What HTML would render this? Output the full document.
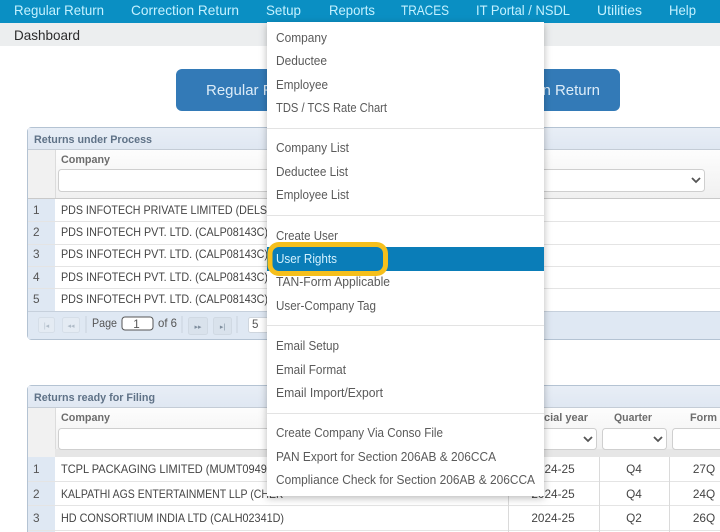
<!DOCTYPE html>
<html lang="en">
<head>
<meta charset="utf-8">
<title>Dashboard</title>
<style>
html,body{margin:0;padding:0;width:720px;height:532px;overflow:hidden;background:#fff}
svg{display:block}
text{font-family:"Liberation Sans",sans-serif}
.nav{font-size:14px;fill:#c4f1ff}
.mi{font-size:12.8px;fill:#5a5a5a}
.ph{font-size:11px;font-weight:bold;fill:#5f7287}
.ch{font-size:11px;font-weight:bold;fill:#6c6c6c}
.rt{font-size:11.8px;fill:#444}
.n{font-size:11.8px;fill:#555}
.c{text-anchor:middle}
.pg{font-size:11.6px;fill:#555}
.sel{fill:#fff;stroke:#cfcfcf}
.chev{fill:none;stroke:#555;stroke-width:1.8}
.btn{fill:#e4ebf3;stroke:#d5dee8}
.ic{font-size:7px;fill:#b0bcc8}
</style>
</head>
<body>
<svg width="720" height="532" viewBox="0 0 720 532" xmlns="http://www.w3.org/2000/svg">
<defs>
<linearGradient id="hd" x1="0" y1="0" x2="0" y2="1"><stop offset="0" stop-color="#fdfdfd"/><stop offset="1" stop-color="#f0f0f0"/></linearGradient>
<linearGradient id="ph" x1="0" y1="0" x2="0" y2="1"><stop offset="0" stop-color="#e8eef6"/><stop offset="1" stop-color="#dfe7f2"/></linearGradient>
<filter id="sh" x="-10%" y="-5%" width="120%" height="110%"><feDropShadow dx="0" dy="2" stdDeviation="4" flood-color="#000" flood-opacity=".28"/></filter>
</defs>

<!-- nav -->
<rect width="720" height="23" fill="#0a8fc3"/>
<text class="nav" x="14" y="15" textLength="90" lengthAdjust="spacingAndGlyphs">Regular Return</text>
<text class="nav" x="131" y="15" textLength="108" lengthAdjust="spacingAndGlyphs">Correction Return</text>
<text class="nav" x="266" y="15" textLength="35" lengthAdjust="spacingAndGlyphs">Setup</text>
<text class="nav" x="329" y="15" textLength="46" lengthAdjust="spacingAndGlyphs">Reports</text>
<text class="nav" x="401" y="15" textLength="48" lengthAdjust="spacingAndGlyphs">TRACES</text>
<text class="nav" x="476" y="15" textLength="94" lengthAdjust="spacingAndGlyphs">IT Portal / NSDL</text>
<text class="nav" x="597" y="15" textLength="45" lengthAdjust="spacingAndGlyphs">Utilities</text>
<text class="nav" x="669" y="15" textLength="27" lengthAdjust="spacingAndGlyphs">Help</text>

<!-- breadcrumb -->
<rect y="23" width="720" height="23" fill="#eceeef"/>
<text x="14" y="40" font-size="14" fill="#2b2b2b" textLength="66" lengthAdjust="spacingAndGlyphs">Dashboard</text>

<!-- button -->
<rect x="176" y="69" width="444" height="42" rx="6" fill="#337ab7"/>
<text x="206" y="95" font-size="15" fill="#dcecf8">Regular Return</text>
<text x="600" y="95" font-size="15" fill="#dcecf8" text-anchor="end">n Return</text>

<!-- panel 1 -->
<rect x="27.5" y="127.5" width="700" height="212" rx="4" fill="#fff" stroke="#b4c3d3"/>
<rect x="28" y="128" width="692" height="22" fill="url(#ph)"/>
<line x1="28" x2="720" y1="149.5" y2="149.5" stroke="#c4ccd6"/>
<text class="ph" x="34" y="143" textLength="118" lengthAdjust="spacingAndGlyphs">Returns under Process</text>
<rect x="28" y="150" width="692" height="49" fill="url(#hd)"/>
<rect x="28" y="150" width="27" height="49" fill="#f1f1f1"/>
<line x1="55.5" x2="55.5" y1="150" y2="199" stroke="#dcdcdc"/>
<line x1="28" x2="720" y1="198.5" y2="198.5" stroke="#c9c9c9"/>
<text class="ch" x="61" y="163" textLength="49" lengthAdjust="spacingAndGlyphs">Company</text>
<rect class="sel" x="58.5" y="169.5" width="646" height="22" rx="3"/>
<path class="chev" d="M692 178l4 4 4-4"/>
<rect x="28" y="199" width="27" height="112" fill="#dfe8f3"/>
<g stroke="#e4e4e4">
<line x1="28" x2="720" y1="221.5" y2="221.5"/>
<line x1="28" x2="720" y1="244.5" y2="244.5"/>
<line x1="28" x2="720" y1="266.5" y2="266.5"/>
<line x1="28" x2="720" y1="288.5" y2="288.5"/>
</g>
<text class="n" x="33" y="214">1</text>
<text class="n" x="33" y="236">2</text>
<text class="n" x="33" y="258">3</text>
<text class="n" x="33" y="281">4</text>
<text class="n" x="33" y="303">5</text>
<text class="rt" x="61" y="214" textLength="212" lengthAdjust="spacingAndGlyphs">PDS INFOTECH PRIVATE LIMITED (DELS0</text>
<text class="rt" x="61" y="236" textLength="207" lengthAdjust="spacingAndGlyphs">PDS INFOTECH PVT. LTD. (CALP08143C)</text>
<text class="rt" x="61" y="258" textLength="207" lengthAdjust="spacingAndGlyphs">PDS INFOTECH PVT. LTD. (CALP08143C)</text>
<text class="rt" x="61" y="281" textLength="207" lengthAdjust="spacingAndGlyphs">PDS INFOTECH PVT. LTD. (CALP08143C)</text>
<text class="rt" x="61" y="303" textLength="207" lengthAdjust="spacingAndGlyphs">PDS INFOTECH PVT. LTD. (CALP08143C)</text>
<!-- pager -->
<rect x="28" y="311" width="692" height="28" fill="#dfe8f3"/>
<line x1="28" x2="720" y1="311.5" y2="311.5" stroke="#c6d0dc"/>
<rect class="btn" x="38.5" y="317.5" width="16" height="15" rx="2"/>
<rect class="btn" x="62.5" y="317.5" width="17" height="15" rx="2"/>
<text class="ic" x="46.5" y="328" text-anchor="middle">|◂</text>
<text class="ic" x="71" y="328" text-anchor="middle">◂◂</text>
<line x1="86" x2="86" y1="316" y2="333" stroke="#c8d2dd"/>
<text class="pg" x="92" y="327" textLength="25" lengthAdjust="spacingAndGlyphs">Page</text>
<rect x="122" y="317" width="31" height="13" rx="3" fill="#fff" stroke="#555"/>
<text class="pg c" x="136.5" y="328">1</text>
<text class="pg" x="158" y="327" textLength="19" lengthAdjust="spacingAndGlyphs">of 6</text>
<line x1="182" x2="182" y1="316" y2="333" stroke="#c8d2dd"/>
<rect x="188.5" y="317.5" width="19" height="17" rx="2" fill="#d9e2ec" stroke="#d0d9e3"/>
<rect x="213.5" y="317.5" width="18" height="17" rx="2" fill="#d9e2ec" stroke="#d0d9e3"/>
<text x="198" y="329" font-size="7" fill="#7f8e9e" text-anchor="middle">▸▸</text>
<text x="222.5" y="329" font-size="7" fill="#7f8e9e" text-anchor="middle">▸|</text>
<line x1="237" x2="237" y1="316" y2="333" stroke="#c8d2dd"/>
<rect x="248.5" y="317.5" width="40" height="15" rx="2" fill="#fff" stroke="#cfd6de"/>
<text class="pg" x="252" y="328">5</text>

<!-- panel 2 -->
<rect x="27.5" y="385.5" width="700" height="160" rx="4" fill="#fff" stroke="#b4c3d3"/>
<rect x="28" y="386" width="692" height="22" fill="url(#ph)"/>
<line x1="28" x2="720" y1="407.5" y2="407.5" stroke="#c4ccd6"/>
<text class="ph" x="34" y="401" textLength="121" lengthAdjust="spacingAndGlyphs">Returns ready for Filing</text>
<rect x="28" y="408" width="692" height="41" fill="url(#hd)"/>
<rect x="28" y="408" width="27" height="49" fill="#f1f1f1"/>
<rect x="55" y="449" width="665" height="8" fill="#e6e6e6"/>
<line x1="55.5" x2="55.5" y1="408" y2="449" stroke="#dcdcdc"/>
<text class="ch" x="61" y="421" textLength="49" lengthAdjust="spacingAndGlyphs">Company</text>
<rect class="sel" x="58.5" y="428.5" width="445" height="21" rx="3"/>
<text class="ch" x="588" y="421" text-anchor="end">Financial year</text>
<text class="ch" x="614" y="421" textLength="38" lengthAdjust="spacingAndGlyphs">Quarter</text>
<text class="ch" x="690" y="421" textLength="27" lengthAdjust="spacingAndGlyphs">Form</text>
<rect class="sel" x="512.5" y="428.5" width="84" height="21" rx="3"/>
<path class="chev" d="M584 437l4 4 4-4"/>
<rect class="sel" x="602.5" y="428.5" width="64" height="21" rx="3"/>
<path class="chev" d="M654 437l4 4 4-4"/>
<rect class="sel" x="672.5" y="428.5" width="60" height="21" rx="3"/>
<rect x="28" y="457" width="27" height="75" fill="#dfe8f3"/>
<g stroke="#e4e4e4">
<line x1="28" x2="720" y1="481.5" y2="481.5"/>
<line x1="28" x2="720" y1="505.5" y2="505.5"/>
<line x1="28" x2="720" y1="530.5" y2="530.5"/>
</g>
<g stroke="#dadada">
<line x1="508.5" x2="508.5" y1="457" y2="532"/>
<line x1="599.5" x2="599.5" y1="457" y2="532"/>
<line x1="669.5" x2="669.5" y1="457" y2="532"/>
</g>
<text class="n" x="33" y="473">1</text>
<text class="n" x="33" y="498">2</text>
<text class="n" x="33" y="522">3</text>
<text class="rt" x="61" y="473" textLength="212" lengthAdjust="spacingAndGlyphs">TCPL PACKAGING LIMITED (MUMT09495</text>
<text class="rt" x="61" y="498" textLength="222" lengthAdjust="spacingAndGlyphs">KALPATHI AGS ENTERTAINMENT LLP (CHEK</text>
<text class="rt" x="61" y="522" textLength="223" lengthAdjust="spacingAndGlyphs">HD CONSORTIUM INDIA LTD (CALH02341D)</text>
<text class="rt c" x="553" y="473">2024-25</text>
<text class="rt c" x="553" y="498">2024-25</text>
<text class="rt c" x="553" y="522">2024-25</text>
<text class="rt c" x="634" y="473">Q4</text>
<text class="rt c" x="634" y="498">Q4</text>
<text class="rt c" x="634" y="522">Q2</text>
<text class="rt c" x="704" y="473">27Q</text>
<text class="rt c" x="704" y="498">24Q</text>
<text class="rt c" x="704" y="522">26Q</text>

<!-- dropdown -->
<rect x="267" y="22" width="277" height="474" fill="#fff" filter="url(#sh)"/>
<g stroke="#e3e3e3">
<line x1="267" x2="544" y1="128.5" y2="128.5"/>
<line x1="267" x2="544" y1="215.5" y2="215.5"/>
<line x1="267" x2="544" y1="325.5" y2="325.5"/>
<line x1="267" x2="544" y1="413.5" y2="413.5"/>
</g>
<text class="mi" x="276" y="42" textLength="51" lengthAdjust="spacingAndGlyphs">Company</text>
<text class="mi" x="276" y="65" textLength="51" lengthAdjust="spacingAndGlyphs">Deductee</text>
<text class="mi" x="276" y="89" textLength="52" lengthAdjust="spacingAndGlyphs">Employee</text>
<text class="mi" x="276" y="112" textLength="111" lengthAdjust="spacingAndGlyphs">TDS / TCS Rate Chart</text>
<text class="mi" x="276" y="152" textLength="73" lengthAdjust="spacingAndGlyphs">Company List</text>
<text class="mi" x="276" y="176" textLength="72" lengthAdjust="spacingAndGlyphs">Deductee List</text>
<text class="mi" x="276" y="199" textLength="73" lengthAdjust="spacingAndGlyphs">Employee List</text>
<text class="mi" x="276" y="240" textLength="62" lengthAdjust="spacingAndGlyphs">Create User</text>
<rect x="267" y="247" width="277" height="24" fill="#0a7db8"/>
<text class="mi" x="276" y="263" textLength="61" lengthAdjust="spacingAndGlyphs" style="fill:#d4f2ff">User Rights</text>
<text class="mi" x="276" y="286" textLength="114" lengthAdjust="spacingAndGlyphs">TAN-Form Applicable</text>
<text class="mi" x="276" y="310" textLength="100" lengthAdjust="spacingAndGlyphs">User-Company Tag</text>
<text class="mi" x="276" y="350" textLength="63" lengthAdjust="spacingAndGlyphs">Email Setup</text>
<text class="mi" x="276" y="374" textLength="70" lengthAdjust="spacingAndGlyphs">Email Format</text>
<text class="mi" x="276" y="397" textLength="107" lengthAdjust="spacingAndGlyphs">Email Import/Export</text>
<text class="mi" x="276" y="437" textLength="167" lengthAdjust="spacingAndGlyphs">Create Company Via Conso File</text>
<text class="mi" x="276" y="461" textLength="220" lengthAdjust="spacingAndGlyphs">PAN Export for Section 206AB &amp; 206CCA</text>
<text class="mi" x="276" y="484" textLength="259" lengthAdjust="spacingAndGlyphs">Compliance Check for Section 206AB &amp; 206CCA</text>

<!-- highlight ring -->
<rect x="270" y="244.5" width="115.5" height="29" rx="9" fill="none" stroke="#f5bf1c" stroke-width="5"/>
</svg>
</body>
</html>
